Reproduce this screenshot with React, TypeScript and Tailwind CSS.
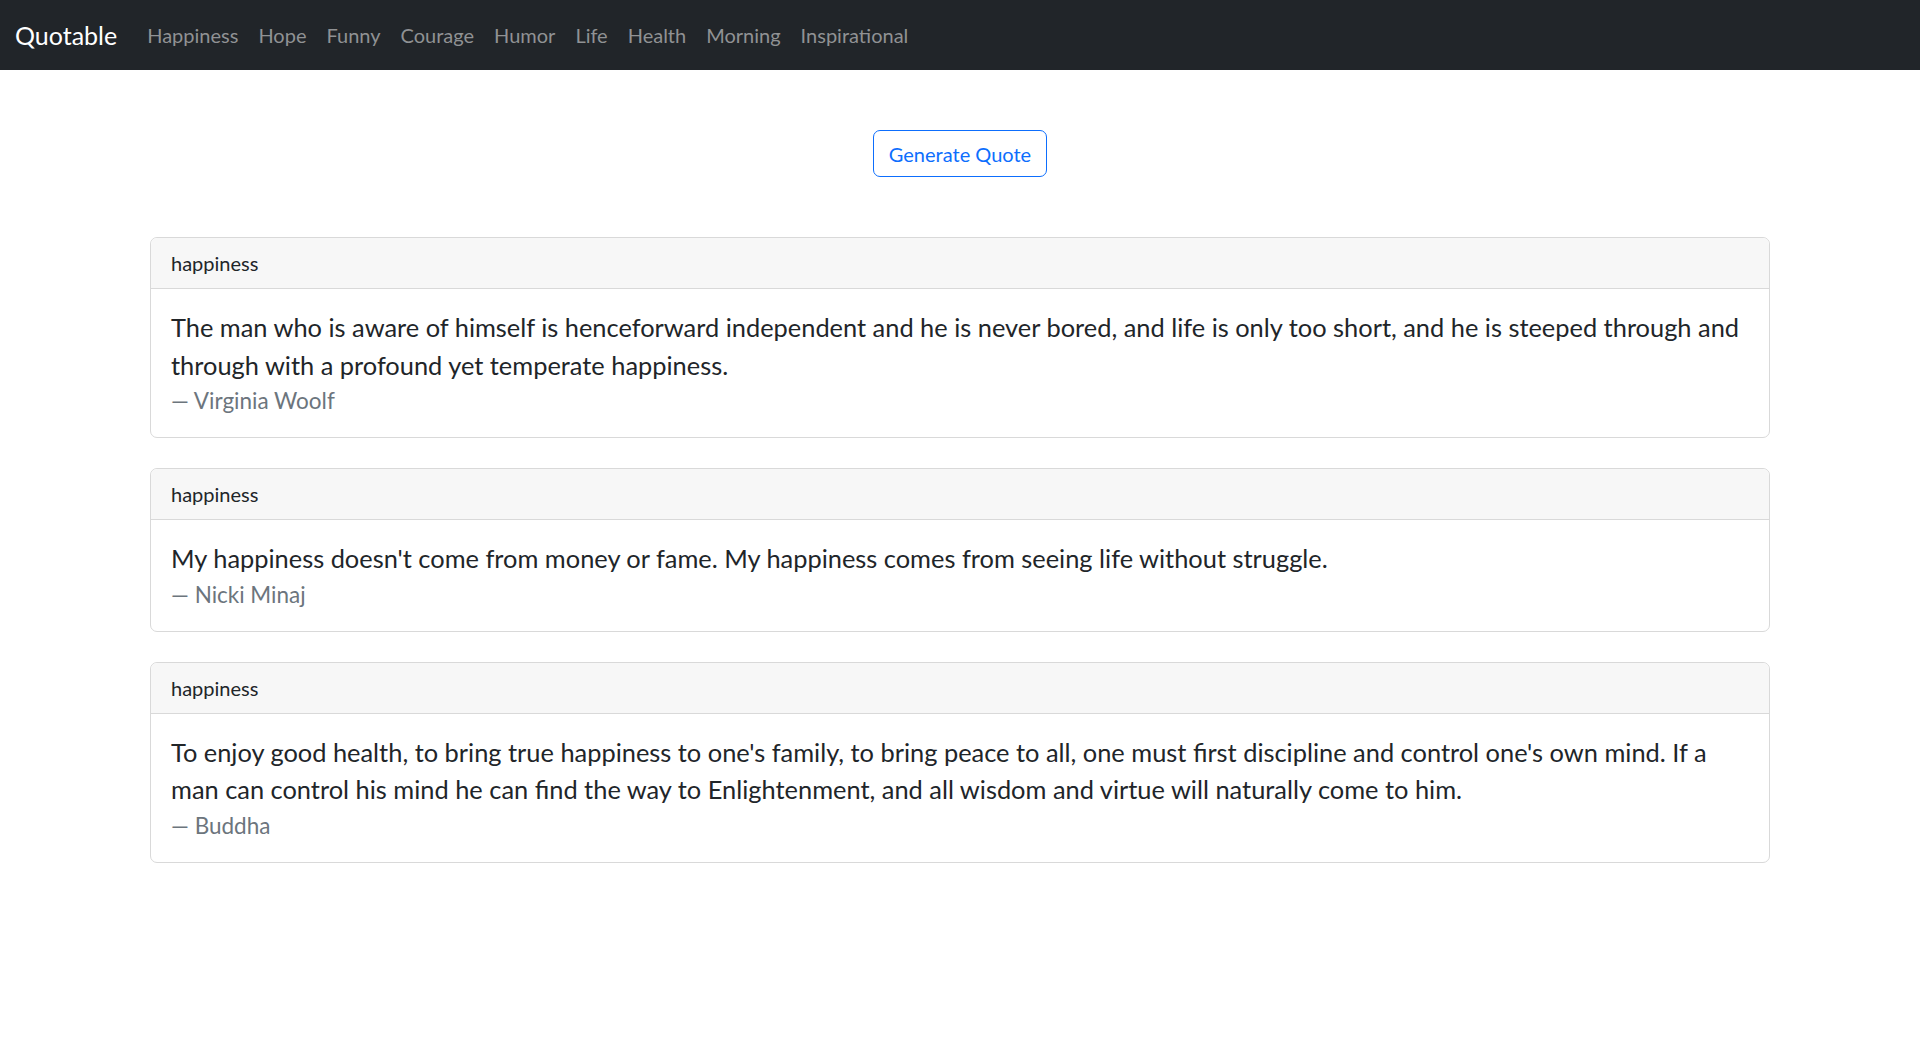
import React from "react";

const links = ["Happiness", "Hope", "Funny", "Courage", "Humor", "Life", "Health", "Morning", "Inspirational"];

const quotes = [
  {
    tag: "happiness",
    text: "The man who is aware of himself is henceforward independent and he is never bored, and life is only too short, and he is steeped through and through with a profound yet temperate happiness.",
    author: "Virginia Woolf",
  },
  {
    tag: "happiness",
    text: "My happiness doesn't come from money or fame. My happiness comes from seeing life without struggle.",
    author: "Nicki Minaj",
  },
  {
    tag: "happiness",
    text: "To enjoy good health, to bring true happiness to one's family, to bring peace to all, one must first discipline and control one's own mind. If a man can control his mind he can find the way to Enlightenment, and all wisdom and virtue will naturally come to him.",
    author: "Buddha",
  },
];

export default function App() {
  return (
    <div className="min-h-screen bg-white font-['Lato','Liberation_Sans',sans-serif] text-[#212529]">
      <nav className="flex h-[70px] items-center bg-[#212529] px-[15px]">
        <a href="#" className="mr-[20px] text-[25px] leading-[37px] text-white">
          Quotable
        </a>
        <ul className="flex">
          {links.map((l) => (
            <li key={l}>
              <a href="#" className="block px-[10px] text-[20px] leading-[30px] text-[#909294]">
                {l}
              </a>
            </li>
          ))}
        </ul>
      </nav>
      <main className="mx-auto w-[1650px] px-[15px]">
        <div className="mb-[60px] mt-[60px] flex justify-center">
          <button className="rounded-[7px] border border-[#0d6efd] px-[15px] py-[7.5px] text-[20px] leading-[30px] text-[#0d6efd]">
            Generate Quote
          </button>
        </div>
        {quotes.map((q, i) => (
          <div key={i} className="mb-[30px] rounded-[7px] border border-[#d9d9d9]">
            <div className="rounded-t-[7px] border-b border-[#d9d9d9] bg-[#f7f7f7] px-[20px] py-[10px] text-[20px] leading-[30px]">
              {q.tag}
            </div>
            <div className="p-[20px]">
              <p className="text-[25.4px] leading-[37.5px]">{q.text}</p>
              <p className="text-[22.5px] leading-[33px] text-[#6c757d]">— {q.author}</p>
            </div>
          </div>
        ))}
      </main>
    </div>
  );
}
